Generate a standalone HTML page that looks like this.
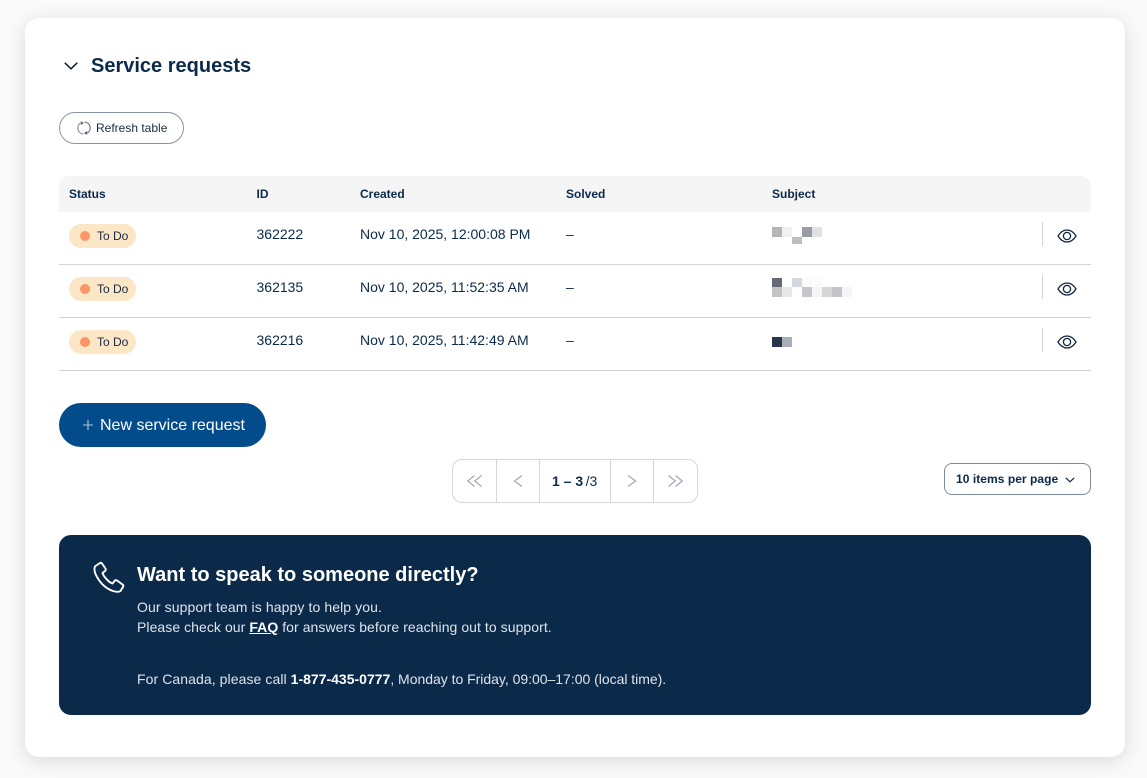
<!DOCTYPE html>
<html><head><meta charset="utf-8"><style>
html,body{margin:0;padding:0;width:1147px;height:778px;overflow:hidden;background:#fafafa;font-family:"Liberation Sans",sans-serif;color:#0b2a4a}
.a{position:absolute;white-space:nowrap;line-height:1}
.card{position:absolute;left:25px;top:18px;width:1100px;height:739px;background:#fff;border-radius:14px;box-shadow:0 4px 20px rgba(0,0,0,.13)}
.px{position:absolute}
.hr{position:absolute;left:59px;width:1032px;height:1px;background:#d4d4d6}
.th{font-size:12px;font-weight:700;top:188px}
.td{font-size:14px;}
.pill{position:absolute;left:69px;width:67px;height:24px;border-radius:12px;background:#fbe7c6}
.pill i{position:absolute;left:11px;top:7px;width:10px;height:10px;border-radius:50%;background:#fd9568}
.pill span{position:absolute;left:28px;top:6px;font-size:12px;line-height:12px;white-space:nowrap;color:#1b2a41}
.sep{position:absolute;left:1042px;width:1px;height:24px;background:#d4d4d6}
svg{position:absolute;overflow:visible}
</style></head><body>
<div class="card"></div>

<svg style="left:64px;top:61.500px" width="14" height="8" viewBox="0 0 14 8"><path d="M.8.800L7 6.800 13.200.800" fill="none" stroke="#0b1f33" stroke-width="1.500"/></svg>
<div class="a" style="left:91px;top:55px;font-size:20px;font-weight:700;line-height:23px">Service requests</div>

<div style="position:absolute;left:59px;top:112px;width:123px;height:30px;border:1px solid #8a94a3;border-radius:16px"></div>
<svg style="left:77px;top:121px" width="14" height="14" viewBox="0 0 14 14" fill="none" stroke-width="1.100"><path d="M7.500 1A6 6 0 0 1 10.500 12" stroke="#5d6979"/><path d="M6.500 13A6 6 0 0 1 3.500 2" stroke="#7d8896"/><path d="M3.800 .2L7 1.900 3.900 4z" fill="#5d6979"/><path d="M10.200 13.800L7 12.100 10.100 10z" fill="#4c5a6c"/></svg>
<div class="a" style="left:96px;top:122px;font-size:12px;color:#1b2a41">Refresh table</div>

<div style="position:absolute;left:59px;top:176px;width:1032px;height:36px;background:#f5f5f5;border-radius:10px 10px 0 0"></div>
<div class="a th" style="left:69px">Status</div>
<div class="a th" style="left:256.500px">ID</div>
<div class="a th" style="left:360px">Created</div>
<div class="a th" style="left:566px">Solved</div>
<div class="a th" style="left:772px">Subject</div>

<div class="hr" style="top:264px"></div>
<div class="hr" style="top:317px"></div>
<div class="hr" style="top:370px"></div>

<div class="pill" style="top:224px"><i></i><span>To Do</span></div>
<div class="pill" style="top:277px"><i></i><span>To Do</span></div>
<div class="pill" style="top:330px"><i></i><span>To Do</span></div>

<div class="a td" style="left:256.500px;top:227px">362222</div>
<div class="a td" style="left:360px;top:227px">Nov 10, 2025, 12:00:08 PM</div>
<div class="a td" style="left:566px;top:227px">–</div>
<div class="a td" style="left:256.500px;top:280px">362135</div>
<div class="a td" style="left:360px;top:280px">Nov 10, 2025, 11:52:35 AM</div>
<div class="a td" style="left:566px;top:280px">–</div>
<div class="a td" style="left:256.500px;top:333px">362216</div>
<div class="a td" style="left:360px;top:333px">Nov 10, 2025, 11:42:49 AM</div>
<div class="a td" style="left:566px;top:333px">–</div>

<div class="px" style="left:772px;top:227px;width:10px;height:10px;background:#b4b5b9"></div>
<div class="px" style="left:782px;top:227px;width:10px;height:10px;background:#f0f0f3"></div>
<div class="px" style="left:792px;top:237px;width:10px;height:7px;background:#bbbfc4"></div>
<div class="px" style="left:802px;top:227px;width:10px;height:10px;background:#9a9ca3"></div>
<div class="px" style="left:812px;top:227px;width:10px;height:10px;background:#e1e2e6"></div>

<div class="px" style="left:772px;top:278px;width:10px;height:9px;background:#666a75"></div>
<div class="px" style="left:792px;top:278px;width:10px;height:9px;background:#d5d9de"></div>
<div class="px" style="left:802px;top:278px;width:20px;height:9px;background:#fbfbfb"></div>
<div class="px" style="left:772px;top:287px;width:10px;height:10px;background:#c4c4c6"></div>
<div class="px" style="left:782px;top:287px;width:10px;height:10px;background:#e8e8ea"></div>
<div class="px" style="left:792px;top:287px;width:10px;height:10px;background:#fdfdfd"></div>
<div class="px" style="left:802px;top:287px;width:10px;height:10px;background:#c5c5ca"></div>
<div class="px" style="left:812px;top:287px;width:10px;height:10px;background:#f5f5f6"></div>
<div class="px" style="left:822px;top:287px;width:10px;height:10px;background:#d6d6d8"></div>
<div class="px" style="left:832px;top:287px;width:10px;height:10px;background:#c4c4c8"></div>
<div class="px" style="left:842px;top:287px;width:10px;height:10px;background:#f5f5f7"></div>

<div class="px" style="left:772px;top:337px;width:10px;height:10px;background:#2a344a"></div>
<div class="px" style="left:782px;top:337px;width:10px;height:10px;background:#a9afb9"></div>
<div class="px" style="left:792px;top:337px;width:10px;height:10px;background:#fdfdfd"></div>

<div class="sep" style="top:222px"></div>
<div class="sep" style="top:275px"></div>
<div class="sep" style="top:328px"></div>
<svg style="left:1057px;top:229px" width="20" height="14" viewBox="0 0 20 14" fill="none" stroke="#12263f" stroke-width="1.300"><path d="M1 7C3.500 3 6.500 1 10 1s6.500 2 9 6c-2.500 4-5.500 6-9 6s-6.500-2-9-6z"/><circle cx="10" cy="7" r="3.600"/></svg>
<svg style="left:1057px;top:282px" width="20" height="14" viewBox="0 0 20 14" fill="none" stroke="#12263f" stroke-width="1.300"><path d="M1 7C3.500 3 6.500 1 10 1s6.500 2 9 6c-2.500 4-5.500 6-9 6s-6.500-2-9-6z"/><circle cx="10" cy="7" r="3.600"/></svg>
<svg style="left:1057px;top:335px" width="20" height="14" viewBox="0 0 20 14" fill="none" stroke="#12263f" stroke-width="1.300"><path d="M1 7C3.500 3 6.500 1 10 1s6.500 2 9 6c-2.500 4-5.500 6-9 6s-6.500-2-9-6z"/><circle cx="10" cy="7" r="3.600"/></svg>

<div style="position:absolute;left:59px;top:403px;width:207px;height:44px;border-radius:22px;background:#034c8c"></div>
<svg style="left:83px;top:420px" width="10" height="10" viewBox="0 0 10 10"><path d="M5 0v10M0 5h10" stroke="#b4c8dc" stroke-width="1.100"/></svg>
<div class="a" style="left:100px;top:417px;font-size:16px;line-height:18px;color:#fff">New service request</div>

<div style="position:absolute;left:452px;top:459px;width:244px;height:42px;border:1px solid #d4d6d9;border-radius:10px"></div>
<div class="px" style="left:496px;top:460px;width:1px;height:42px;background:#d4d6d9"></div>
<div class="px" style="left:539px;top:460px;width:1px;height:42px;background:#d4d6d9"></div>
<div class="px" style="left:610px;top:460px;width:1px;height:42px;background:#d4d6d9"></div>
<div class="px" style="left:653px;top:460px;width:1px;height:42px;background:#d4d6d9"></div>
<svg style="left:467px;top:475px" width="15" height="12" viewBox="0 0 15 12" fill="none" stroke="#9ea7b2" stroke-width="1.200"><path d="M7.500 .5L.8 6l6.700 5.500M14.500 .5L7.800 6l6.700 5.500"/></svg>
<svg style="left:513px;top:475px" width="10" height="12" viewBox="0 0 10 12" fill="none" stroke="#9ea7b2" stroke-width="1.200"><path d="M9 .5L1.500 6 9 11.500"/></svg>
<div class="a" style="left:552px;top:474px;font-size:14px;line-height:15px"><b>1 – 3</b><span style="margin-left:2.500px">/3</span></div>
<svg style="left:627px;top:475px" width="10" height="12" viewBox="0 0 10 12" fill="none" stroke="#9ea7b2" stroke-width="1.200"><path d="M1 .5L8.500 6 1 11.500"/></svg>
<svg style="left:668px;top:475px" width="15" height="12" viewBox="0 0 15 12" fill="none" stroke="#9ea7b2" stroke-width="1.200"><path d="M.5 .5L7.200 6 .5 11.500M7.500 .5L14.200 6 7.500 11.500"/></svg>

<div style="position:absolute;left:944px;top:463px;width:145px;height:30px;border:1px solid #7f8b9a;border-radius:8px"></div>
<div class="a" style="left:956px;top:473px;font-size:12px;font-weight:700;line-height:13px;letter-spacing:.05px">10 items per page</div>
<svg style="left:1065px;top:477px" width="10" height="6" viewBox="0 0 10 6"><path d="M.8.800L5 4.800 9.200.800" fill="none" stroke="#0b2a4a" stroke-width="1.200"/></svg>

<div style="position:absolute;left:59px;top:535px;width:1032px;height:180px;border-radius:12px;background:#0b2a4a"></div>
<svg style="left:94px;top:562px" width="31" height="31" viewBox="0 0 31 31" fill="none" stroke="#fff" stroke-width="1.900" stroke-linejoin="round"><path d="M6 1L1.500 4C-.5 6 .5 11 3 15C7 22 13 27 19 29C22 30 25 30 26.500 29L29 25C29.500 24 29.500 23 28.500 22.500L23 18.500C22 18 21 18 20.500 19L18.500 21.500C15 20.500 9.500 14.500 8.500 11L11 9C12 8 12 7.500 11.500 6.500L8 1.500C7.500 .8 6.800 .5 6 1z"/></svg>
<div class="a" style="left:137px;top:564px;font-size:20px;font-weight:700;line-height:23px;color:#fff">Want to speak to someone directly?</div>
<div class="a" style="left:137px;top:599px;font-size:14px;line-height:16px;color:#dfe4ea;letter-spacing:.1px">Our support team is happy to help you.</div>
<div class="a" style="left:137px;top:619px;font-size:14px;line-height:16px;color:#dfe4ea;letter-spacing:.06px">Please check our <b style="color:#fff;text-decoration:underline">FAQ</b> for answers before reaching out to support.</div>
<div class="a" style="left:137px;top:671px;font-size:14px;line-height:16px;color:#dfe4ea"><span style="letter-spacing:.08px">For Canada, please call </span><b style="color:#fff">1-877-435-0777</b><span style="letter-spacing:-.02px">, Monday to Friday, 09:00–17:00 (local time).</span></div>
</body></html>
